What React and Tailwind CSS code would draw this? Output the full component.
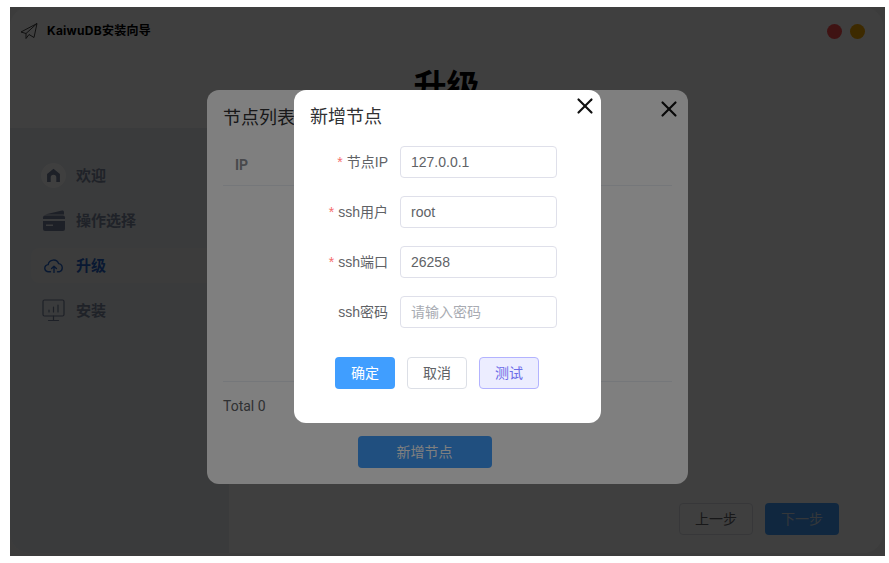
import { X } from 'lucide-react';

const sans = "font-['Liberation_Sans','Noto_Sans_CJK_SC',sans-serif]";

function PlaneIcon() {
  return (
    <svg width="18" height="18" viewBox="0 0 18 18" fill="none" stroke="#2a2a2a" strokeWidth="0.9" strokeLinejoin="round">
      <path d="M17 1.5 1 10l5 1.5L17 1.5ZM17 1.5 14 15.5 9 12.5 6 16.5v-5" />
    </svg>
  );
}

function HomeIcon() {
  return (
    <svg width="15" height="15" viewBox="0 0 14 14" fill="#76829c">
      <path fillRule="evenodd" d="M7 .8 13 5.6V13H9.6V8.8a2.6 2.6 0 0 0-5.2 0V13H1V5.6L7 .8Z" />
    </svg>
  );
}

function CardIcon() {
  return (
    <svg width="24" height="22" viewBox="0 0 24 22" fill="#76829c">
      <path d="M3 4.5 20 .5c1-.2 2 .5 2 1.5v2.5H3Z" />
      <rect x="1" y="5.5" width="22" height="15.5" rx="2" />
      <rect x="1" y="9" width="22" height="2" fill="#e9ecf0" />
      <rect x="4" y="14.5" width="7" height="1.5" fill="#e9ecf0" />
    </svg>
  );
}

function CloudIcon() {
  return (
    <svg width="20" height="14" viewBox="0 0 20 14" fill="none" stroke="#2563c9" strokeWidth="1.4" strokeLinecap="round" strokeLinejoin="round">
      <path d="M6.5 12.8H4.6A3.6 3.6 0 0 1 4.2 5.6 5.4 5.4 0 0 1 14.6 4.6a4.2 4.2 0 0 1 .6 8.2h-1.7" />
      <path d="M10 13.4V7.4M7.6 9.6 10 7.2l2.4 2.4" />
    </svg>
  );
}

function MonitorIcon() {
  return (
    <svg width="23" height="23" viewBox="0 0 23 23" fill="none" stroke="#76829c" strokeWidth="1.2" strokeLinecap="round">
      <rect x="1" y="1" width="21" height="16" rx="1.5" />
      <path d="M7 13v-2M11.5 13V8M16 13V6M11.5 17v4M6.5 21.5h10" />
    </svg>
  );
}

function NavItem({ icon, label, active }) {
  return (
    <div className={`flex h-[35px] items-center rounded-l-lg pl-[10px] ${active ? 'bg-[#f1f3f0]' : ''}`}>
      <span className="flex w-[25px] shrink-0 items-center justify-center">{icon}</span>
      <span className={`ml-[10px] pt-[2px] text-[15px] font-bold ${active ? 'text-[#2563c9]' : 'text-[#7f8aa3]'}`}>{label}</span>
    </div>
  );
}

function FormRow({ label, required, value, placeholder }) {
  return (
    <div className="flex h-8 items-center">
      <label className="w-[106px] pr-3 text-right text-sm text-[#606266]">
        {required && <span className="mr-1 text-[#f56c6c]">*</span>}
        {label}
      </label>
      <div className="flex h-8 w-[157px] items-center rounded border border-[#dfe0ea] px-[10px] text-sm">
        {value ? <span className="text-[#606266]">{value}</span> : <span className="text-[#a8abb2]">{placeholder}</span>}
      </div>
    </div>
  );
}

export default function App() {
  return (
    <div className={`h-[563px] w-[889px] overflow-hidden bg-white pl-[10px] pt-[7px] ${sans}`}>
      <div className="relative h-[549px] w-[875px] overflow-hidden bg-[#f3f3f3]">
        {/* window behind the masks */}
        <div className="flex h-[546px] w-[873px] flex-col overflow-hidden rounded-[20px] bg-white">
          <div className="h-[121px] shrink-0">
            <div className="flex h-12 items-center pl-[10px]">
              <PlaneIcon />
              <span className="ml-[9px] font-['Inter','Noto_Sans_CJK_SC',sans-serif] text-xs font-bold tracking-[0.25px] text-black">KaiwuDB安装向导</span>
              <div className="ml-auto mr-[18px] flex gap-[8px]">
                <span className="h-[15px] w-[15px] rounded-full bg-[#ff4d4f]" />
                <span className="h-[15px] w-[15px] rounded-full bg-[#f5a800]" />
              </div>
            </div>
            <div className="pt-[10px] text-center text-[33px] font-bold leading-[44px] text-black">升级</div>
          </div>
          <div className="flex min-h-0 flex-1">
            <div className="flex w-[219px] shrink-0 flex-col gap-[10px] bg-[#e9ecf0] pl-[21px] pt-[30px]">
              <NavItem label="欢迎" icon={<span className="flex h-[25px] w-[25px] items-center justify-center rounded-full bg-white"><HomeIcon /></span>} />
              <NavItem label="操作选择" icon={<CardIcon />} />
              <NavItem label="升级" active icon={<CloudIcon />} />
              <NavItem label="安装" icon={<MonitorIcon />} />
            </div>
            <div className="flex flex-1 items-end justify-end gap-3 pb-[18px] pr-[44px]">
              <button className="h-8 w-[74px] rounded border border-[#dcdfe6] text-sm text-[#606266]">上一步</button>
              <button className="h-8 w-[74px] rounded bg-[#409eff] text-sm text-[#d0dce8]">下一步</button>
            </div>
          </div>
        </div>

        {/* mask + node list dialog */}
        <div className="absolute inset-0 bg-black/50">
          <div className="absolute left-[197px] top-[83px] flex h-[394px] w-[481px] flex-col rounded-xl bg-white px-4">
            <X size={26} strokeWidth={2} className="absolute right-[6px] top-[6px] text-[#111]" />
            <div className="flex h-[55px] items-center pt-[1px] text-lg text-[#303133]">节点列表</div>
            <div className="flex h-[41px] items-center border-b border-[#ebeef5] pl-3 font-['Roboto',sans-serif] text-sm font-bold text-[#909399]">IP</div>
            <div className="h-[196px] border-b border-[#ebeef5]" />
            <div className="flex h-[48px] items-center font-['Roboto',sans-serif] text-sm text-[#606266]">Total 0</div>
            <div className="flex justify-center pr-[46px] pt-[6px]">
              <button className="h-8 w-[134px] rounded bg-[#409eff] text-sm text-white">新增节点</button>
            </div>
          </div>
        </div>

        {/* mask + add node dialog */}
        <div className="absolute inset-0 bg-black/50">
          <div className="absolute left-[284px] top-[83px] h-[333px] w-[307px] rounded-xl bg-white">
            <X size={26} strokeWidth={2} className="absolute right-[3px] top-[3px] text-[#111]" />
            <div className="px-4 pt-[15px] text-lg leading-6 text-[#303133]">新增节点</div>
            <div className="flex flex-col gap-[18px] pt-[17px]">
              <FormRow label="节点IP" required value="127.0.0.1" />
              <FormRow label="ssh用户" required value="root" />
              <FormRow label="ssh端口" required value="26258" />
              <FormRow label="ssh密码" placeholder="请输入密码" />
            </div>
            <div className="flex gap-3 pl-[41px] pt-[29px] text-sm">
              <button className="h-8 w-[60px] rounded bg-[#409eff] text-white">确定</button>
              <button className="h-8 w-[60px] rounded border border-[#dcdfe6] text-[#606266]">取消</button>
              <button className="h-8 w-[60px] rounded border border-[#b3b3ff] bg-[#ecedff] text-[#6b6be8]">测试</button>
            </div>
          </div>
        </div>
      </div>
    </div>
  );
}
